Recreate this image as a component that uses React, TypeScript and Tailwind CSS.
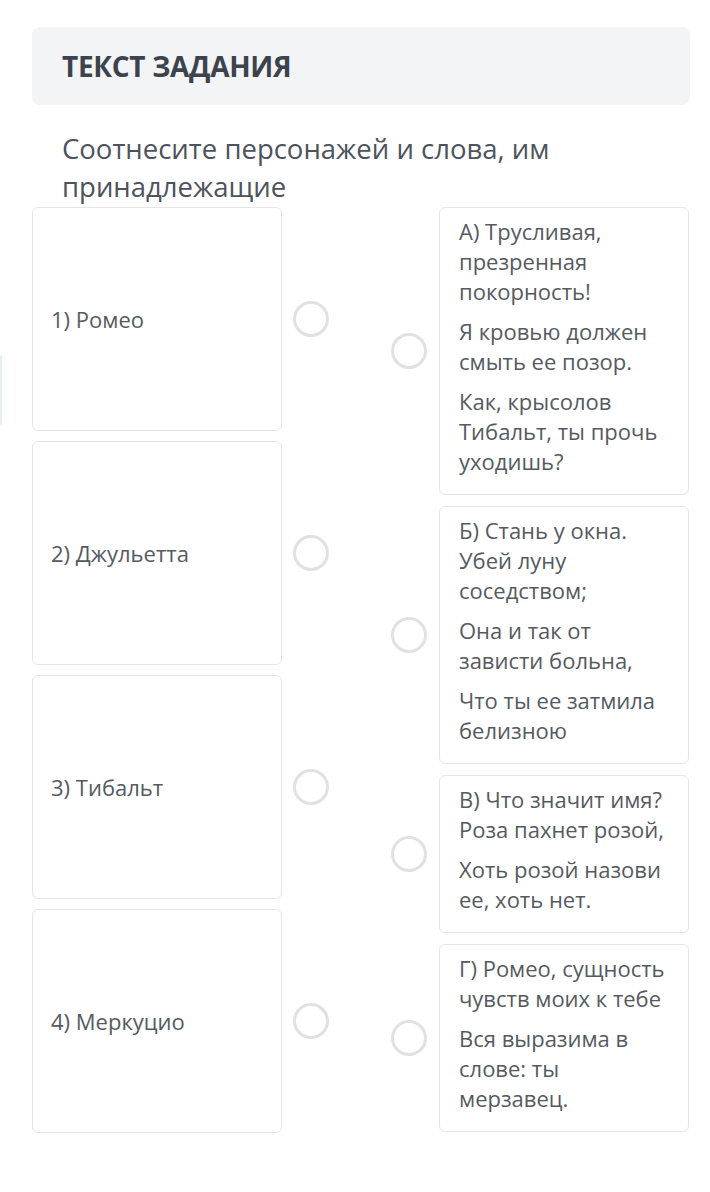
import React from "react";

const characters = ["1) Ромео", "2) Джульетта", "3) Тибальт", "4) Меркуцио"];

const quotes: string[][] = [
  [
    "А) Трусливая, презренная покорность!",
    "Я кровью должен смыть ее позор.",
    "Как, крысолов Тибальт, ты прочь уходишь?",
  ],
  [
    "Б) Стань у окна. Убей луну соседством;",
    "Она и так от зависти больна,",
    "Что ты ее затмила белизною",
  ],
  ["В) Что значит имя? Роза пахнет розой,", "Хоть розой назови ее, хоть нет."],
  ["Г) Ромео, сущность чувств моих к тебе", "Вся выразима в слове: ты мерзавец."],
];

function Radio() {
  return <div className="w-[36px] h-[36px] shrink-0 rounded-full border-[3px] border-[#dfe1e4] bg-white" />;
}

export default function App() {
  return (
    <div
      className="relative w-[710px] h-[1192px] bg-white pl-[32px] pr-[21px] pt-[27px]"
      style={{ fontFamily: '"Open Sans", "Noto Sans", sans-serif' }}
    >
      <div className="absolute left-0 top-[355px] w-[2px] h-[70px] bg-[#e3f1ef]" />

      <div className="h-[78px] mr-[-1px] rounded-lg bg-[#f3f4f6] flex items-center px-[30px]">
        <h2 className="text-[28px] font-bold text-[#3d434d] tracking-[-0.3px]">ТЕКСТ ЗАДАНИЯ</h2>
      </div>

      <p className="mt-[25px] px-[30px] text-[27.5px] leading-[38px] text-[#4d535c]">
        Соотнесите персонажей и слова, им принадлежащие
      </p>

      <div className="mt-[1px] flex justify-between">
        <div className="flex flex-col gap-[10px]">
          {characters.map((name) => (
            <div key={name} className="flex items-center">
              <div className="w-[250px] h-[224px] rounded-md border border-[#e4e5e7] bg-white flex items-center px-[18px] text-[22px] text-[#555a61]">
                {name}
              </div>
              <div className="ml-[11px]">
                <Radio />
              </div>
            </div>
          ))}
        </div>

        <div className="flex flex-col gap-[11px]">
          {quotes.map((q, i) => (
            <div key={i} className="flex items-center">
              <Radio />
              <div className="ml-[12px] w-[250px] rounded-md border border-[#e4e5e7] bg-white px-[19px] pt-[8px] pb-[8px] text-[22px] leading-[30px] text-[#555a61]">
                {q.map((line) => (
                  <p key={line} className="mb-[10px]">
                    {line}
                  </p>
                ))}
              </div>
            </div>
          ))}
        </div>
      </div>
    </div>
  );
}
